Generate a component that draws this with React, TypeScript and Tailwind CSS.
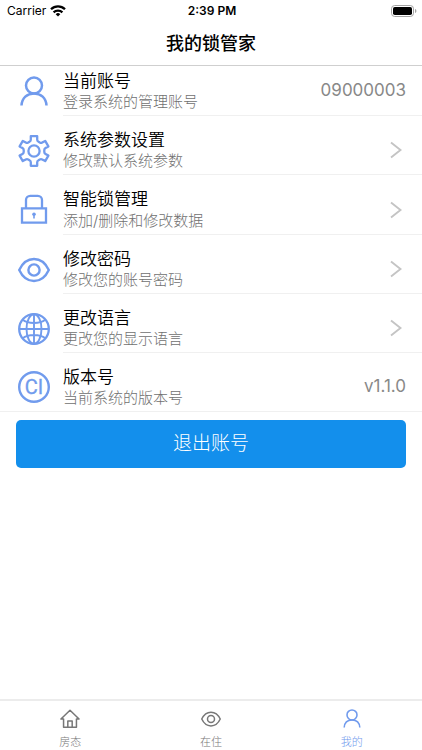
import React from 'react';
import clsx from 'clsx';

interface IconProps {
  className?: string;
}

function UserIcon({ className }: IconProps) {
  return (
    <svg viewBox="0 0 32 32" fill="none" stroke="currentColor" strokeWidth="2.5" className={className} aria-hidden="true">
      <circle cx="16" cy="9.500" r="8" />
      <path d="M3.500 29.500C4 22 9 17.500 16 17.500s12 4.500 12.500 12" />
    </svg>
  );
}

function GearIcon({ className }: IconProps) {
  return (
    <svg viewBox="0 0 32 32" fill="none" stroke="currentColor" strokeWidth="2.300" strokeLinejoin="round" className={className} aria-hidden="true">
      <path d="M12.800 1.200h6.400v3.600q0 1.400 1.300 2l1.300.8q1.200.7 2.400 0l3-1.700 3.200 5.500-2.900 1.700q-1.200.7-1.200 2v1.800q0 1.300 1.200 2l2.900 1.700-3.200 5.500-3-1.700q-1.200-.7-2.400 0l-1.300.8q-1.300.6-1.300 2v3.600h-6.400v-3.600q0-1.400-1.300-2l-1.300-.8q-1.200-.7-2.400 0l-3 1.700-3.200-5.500 2.900-1.700q1.200-.7 1.200-2v-1.800q0-1.300-1.200-2l-2.900-1.700 3.200-5.500 3 1.700q1.200.7 2.400 0l1.300-.8q1.300-.6 1.300-2z" />
      <circle cx="16" cy="16" r="5.600" />
    </svg>
  );
}

function LockIcon({ className }: IconProps) {
  return (
    <svg viewBox="0 0 32 32" fill="none" stroke="currentColor" strokeWidth="2.300" className={className} aria-hidden="true">
      <path d="M4 14.300h24v14.400H4z" />
      <path d="M8 14.300V6a4.200 4.200 0 0 1 4.200-4.200h7.600A4.200 4.200 0 0 1 24 6v8.300" />
      <circle cx="16" cy="20.300" r="1.800" fill="currentColor" stroke="none" />
      <path d="M16 20.500v4" strokeWidth="1.600" />
    </svg>
  );
}

function EyeIcon({ className }: IconProps) {
  return (
    <svg viewBox="0 0 32 32" fill="none" stroke="currentColor" strokeWidth="2.400" strokeLinejoin="round" className={className} aria-hidden="true">
      <path d="M1.200 16C4.500 9 9.500 5 16 5S27.500 9 30.800 16C27.500 23 22.500 27 16 27S4.500 23 1.200 16z" />
      <circle cx="16" cy="16" r="5.600" />
    </svg>
  );
}

function GlobeIcon({ className }: IconProps) {
  return (
    <svg viewBox="0 0 32 32" fill="none" stroke="currentColor" strokeWidth="1.900" className={className} aria-hidden="true">
      <circle cx="16" cy="16" r="14.800" strokeWidth="2.300" />
      <ellipse cx="16" cy="16" rx="7.500" ry="14.800" />
      <path d="M16 1v30M1 16h30M4.500 6.500C7.500 9 11.500 10 16 10s8.500-1 11.500-3.500M4.500 25.500C7.500 23 11.500 22 16 22s8.500 1 11.500 3.500" />
    </svg>
  );
}

function VersionIcon({ className }: IconProps) {
  return (
    <svg viewBox="0 0 32 32" className={className} aria-hidden="true">
      <circle cx="16" cy="16" r="14.800" fill="none" stroke="currentColor" strokeWidth="2.400" />
      <text x="16" y="23" textAnchor="middle" fill="currentColor" stroke="currentColor" strokeWidth="0.300" fontFamily="Roboto, sans-serif" fontSize="20" fontWeight="400">
        CI
      </text>
    </svg>
  );
}

function HomeIcon({ className }: IconProps) {
  return (
    <svg viewBox="0 0 32 32" fill="none" stroke="currentColor" strokeWidth="2.400" strokeLinejoin="round" className={className} aria-hidden="true">
      <path d="M16 2 1.500 16h4.200v13h20.600V16h4.200z" />
      <path d="M12.500 29V19h7v10" />
    </svg>
  );
}

function ChevronIcon({ className }: IconProps) {
  return (
    <svg viewBox="0 0 12 18" fill="none" stroke="currentColor" strokeWidth="1.900" className={className} aria-hidden="true">
      <path d="M1 1.500 10.500 9 1 16.500" />
    </svg>
  );
}

function WifiIcon({ className }: IconProps) {
  return (
    <svg viewBox="0 0 16 12" fill="none" stroke="currentColor" strokeWidth="2.300" className={className} aria-hidden="true">
      <path d="M1 4.300a10 10 0 0 1 14 0" />
      <path d="M3.600 7.400a6.300 6.300 0 0 1 8.800 0" />
      <path d="M8 11.500 5.700 9.200a3.300 3.300 0 0 1 4.600 0z" fill="currentColor" stroke="none" />
    </svg>
  );
}

function BatteryIcon({ className }: IconProps) {
  return (
    <svg viewBox="0 0 26 12" className={className} aria-hidden="true">
      <rect x="0.500" y="0.500" width="22" height="11" rx="3.200" fill="none" stroke="#a3a3a3" />
      <rect x="2" y="2" width="19" height="8" rx="1.800" fill="currentColor" />
      <path d="M24 4v4c.9-.3 1.400-1.100 1.400-2S24.900 4.300 24 4z" fill="#a3a3a3" />
    </svg>
  );
}

interface Setting {
  title: string;
  description: string;
  Icon: (props: IconProps) => React.JSX.Element;
  value?: string;
}

const SETTINGS: Setting[] = [
  { title: '当前账号', description: '登录系统的管理账号', Icon: UserIcon, value: '09000003' },
  { title: '系统参数设置', description: '修改默认系统参数', Icon: GearIcon },
  { title: '智能锁管理', description: '添加/删除和修改数据', Icon: LockIcon },
  { title: '修改密码', description: '修改您的账号密码', Icon: EyeIcon },
  { title: '更改语言', description: '更改您的显示语言', Icon: GlobeIcon },
  { title: '版本号', description: '当前系统的版本号', Icon: VersionIcon, value: 'v1.1.0' },
];

const TABS = [
  { label: '房态', Icon: HomeIcon },
  { label: '在住', Icon: EyeIcon },
  { label: '我的', Icon: UserIcon },
];

function SettingRow({ setting, first, last }: { setting: Setting; first: boolean; last: boolean }) {
  const { title, description, Icon, value } = setting;
  const rowClass = clsx('flex w-full text-left', last && 'border-b border-[#f0f0f0]');
  const spacing = first ? 'pt-1 pb-[3px]' : 'pt-[13px] pb-[3px]';

  const content = (
    <>
      <span className={clsx('flex w-[63px] shrink-0 items-center pl-[18px]', spacing)}>
        <Icon className="size-8 text-[#719bed]" />
      </span>
      <span className={clsx('flex grow items-center justify-between pr-4', spacing, !last && 'border-b border-[#f0f0f0]')}>
        <span className="flex flex-col">
          <span className="text-[17px] leading-[22px] font-[350] text-black">{title}</span>
          <span className={clsx('text-[15px] font-light text-[#707070]', description.includes('/') ? 'leading-[21px]' : 'leading-[20px]')}>
            {description}
          </span>
        </span>
        {value ? (
          <span className="text-[17px] font-normal text-[#888888]">{value}</span>
        ) : (
          <ChevronIcon className="mr-1 h-[18px] w-3 text-[#c4c4c4]" />
        )}
      </span>
    </>
  );

  return (
    <li>
      {value ? (
        <div className={rowClass}>{content}</div>
      ) : (
        <button type="button" className={rowClass}>
          {content}
        </button>
      )}
    </li>
  );
}

function App() {
  return (
    <div className="flex min-h-screen flex-col bg-white font-['Inter','Noto_Sans_CJK_SC',sans-serif] text-black">
      <div className="grid h-[22px] grid-cols-3 items-center pr-[5px] pl-[7px] text-[12px]">
        <div className="flex items-center gap-1">
          <span>Carrier</span>
          <WifiIcon className="h-3 w-4" />
        </div>
        <span className="text-center font-semibold">2:39 PM</span>
        <BatteryIcon className="h-3 w-[26px] justify-self-end" />
      </div>

      <header className="flex h-11 items-center justify-center border-b border-[#cfcfcf]">
        <h1 className="text-[18px] leading-6 font-medium">我的锁管家</h1>
      </header>

      <main className="grow">
        <ul>
          {SETTINGS.map((setting, index) => (
            <SettingRow
              key={setting.title}
              setting={setting}
              first={index === 0}
              last={index === SETTINGS.length - 1}
            />
          ))}
        </ul>
        <div className="px-4 pt-2">
          <button type="button" className="h-12 w-full rounded-[5px] bg-[#138fec] text-[19px] font-light text-white">
            退出账号
          </button>
        </div>
      </main>

      <nav className="sticky bottom-0 grid grid-cols-3 border-t-2 border-[#ececec] bg-white">
        {TABS.map(({ label, Icon }) => {
          const active = label === '我的';
          return (
            <a
              key={label}
              href="#"
              aria-current={active ? 'page' : undefined}
              className={clsx('flex flex-col items-center gap-[5px] pt-2', active ? 'text-[#719bed]' : 'text-[#777777]')}
            >
              <Icon className="size-5" />
              <span className="text-[11px] leading-4 font-light">{label}</span>
            </a>
          );
        })}
      </nav>
    </div>
  );
}

export default App;
